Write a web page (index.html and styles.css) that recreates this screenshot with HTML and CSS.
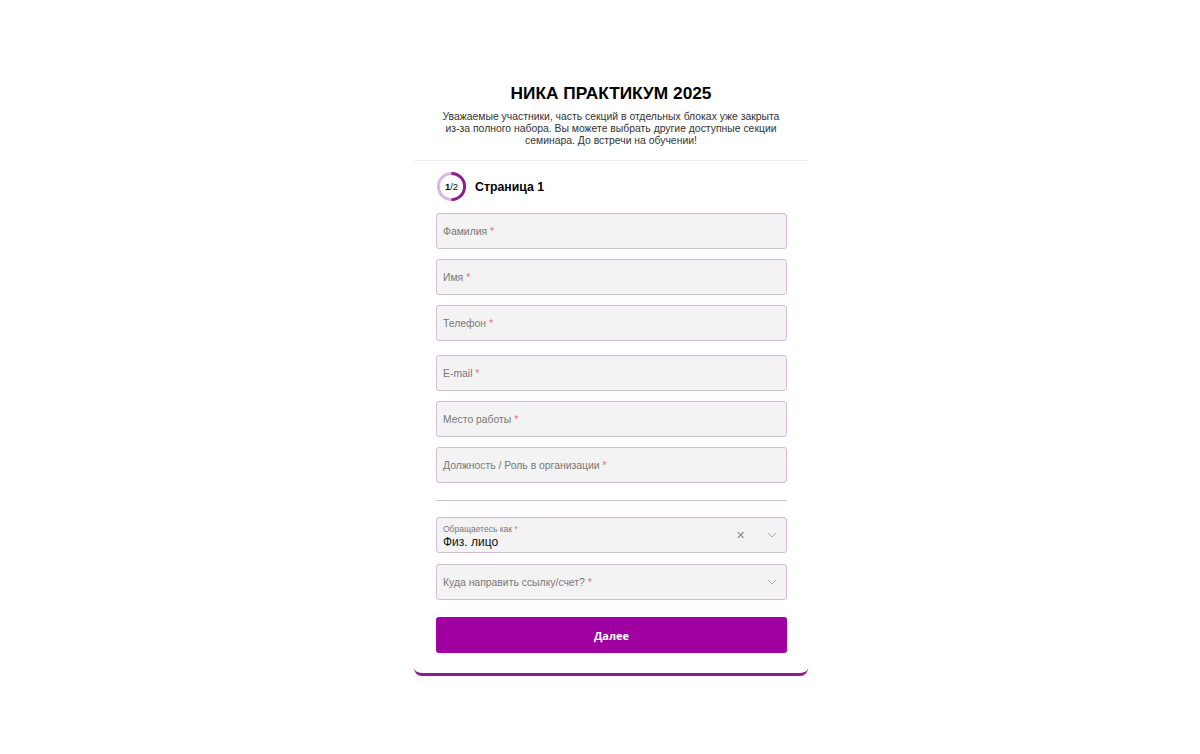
FILE: index.html
```html
<!DOCTYPE html>
<html lang="ru">
<head>
<meta charset="utf-8">
<title>НИКА ПРАКТИКУМ 2025</title>
<link rel="stylesheet" href="styles.css">
</head>
<body>
<div class="card">
  <header class="head">
    <h1 class="title">НИКА ПРАКТИКУМ 2025</h1>
    <p class="desc">Уважаемые участники, часть секций в отдельных блоках уже закрыта из-за полного набора. Вы можете выбрать другие доступные секции семинара. До встречи на обучении!</p>
  </header>
  <div class="body">
    <div class="page-head">
      <div class="ring">
        <svg width="32" height="32" viewBox="0 0 32 32">
          <circle cx="16" cy="16" r="13.5" fill="none" stroke="#dcb4e0" stroke-width="3"/>
          <path d="M16 2.5 A13.5 13.5 0 0 1 16 29.5" fill="none" stroke="#8e1b92" stroke-width="3"/>
        </svg>
        <span class="ring-text"><b>1</b>/2</span>
      </div>
      <span class="page-title">Страница 1</span>
    </div>
    <div class="field"><span class="ph">Фамилия <i>*</i></span></div>
    <div class="field"><span class="ph">Имя <i>*</i></span></div>
    <div class="field field-phone"><span class="ph">Телефон <i>*</i></span></div>
    <div class="field"><span class="ph">E-mail <i>*</i></span></div>
    <div class="field"><span class="ph">Место работы <i>*</i></span></div>
    <div class="field"><span class="ph">Должность / Роль в организации <i>*</i></span></div>
    <hr class="sep">
    <div class="field select">
      <div class="sel-val">
        <span class="lbl">Обращаетесь как <i>*</i></span>
        <span class="val">Физ. лицо</span>
      </div>
      <span class="clear">✕</span>
      <svg class="chev" width="10" height="6" viewBox="0 0 10 6"><path d="M1 1l4 4 4-4" fill="none" stroke="#aaa" stroke-width="1"/></svg>
    </div>
    <div class="field select">
      <span class="ph">Куда направить ссылку/счет? <i>*</i></span>
      <svg class="chev" width="10" height="6" viewBox="0 0 10 6"><path d="M1 1l4 4 4-4" fill="none" stroke="#aaa" stroke-width="1"/></svg>
    </div>
    <button class="btn">Далее</button>
  </div>
</div>
</body>
</html>
```
FILE: styles.css
```css
* { box-sizing: border-box; }
html, body { margin: 0; padding: 0; background: #fff; }
body { font-family: "Liberation Sans", Arial, sans-serif; color: #111; }
.card {
  width: 394px;
  margin: 77px 0 0 calc(50% - 186px);
  background: #fff;
  border-bottom: 3px solid #8e1b92;
  border-radius: 0 0 8px 8px;
  box-shadow: 0 4px 4px -3px rgba(0,0,0,0.2);
}
.head {
  text-align: center;
  padding: 0 28px 13px;
  border-bottom: 1px solid #eee;
}
.title {
  margin: 0;
  font-size: 17.3px;
  line-height: 32px;
  font-weight: bold;
  color: #000;
}
.desc {
  margin: 2px 0 0;
  font-size: 10.4px;
  line-height: 12px;
  color: #333;
}
.body { padding: 10px 21px 20px 22px; }
.page-head { display: flex; align-items: center; gap: 8px; margin-bottom: 11px; }
.ring { position: relative; width: 31px; height: 31px; }
.ring svg { display: block; width: 31px; height: 31px; }
.ring-text {
  position: absolute; inset: 0;
  display: flex; align-items: center; justify-content: center;
  font-size: 9.5px; color: #111;
}
.ring-text b { font-weight: bold; }
.page-title { font-size: 12.3px; font-weight: bold; color: #000; }
.field {
  height: 36px;
  background: #f4f3f4;
  border: 1px solid #d4bcd6;
  border-radius: 3px;
  display: flex;
  align-items: center;
  padding: 0 7px 0 6px;
  margin-bottom: 10px;
}
.field-phone { margin-bottom: 14px; }
.ph { font-size: 10.4px; color: #777; }
.ph i, .lbl i { font-style: normal; color: #e07070; }
.sep { border: 0; border-top: 1px solid #d4bcd6; margin: 17px 0 16px; }
.select { justify-content: space-between; margin-bottom: 11px; }
.sel-val { display: flex; flex-direction: column; flex: 1; padding-top: 3px; }
.lbl { font-size: 8.5px; color: #777; line-height: 10px; }
.val { font-size: 12px; color: #111; line-height: 15px; margin-top: 1px; }
.clear { font-size: 11px; color: #888; margin-right: 22px; }
.chev { margin-right: 2px; }
.btn {
  display: block;
  width: 100%;
  height: 36px;
  margin-top: 17px;
  border: 0;
  border-radius: 3px;
  background: #a100a1;
  color: #fff;
  font-family: "Open Sans", "Liberation Sans", sans-serif;
  font-weight: bold;
  font-size: 11px;
}
```
